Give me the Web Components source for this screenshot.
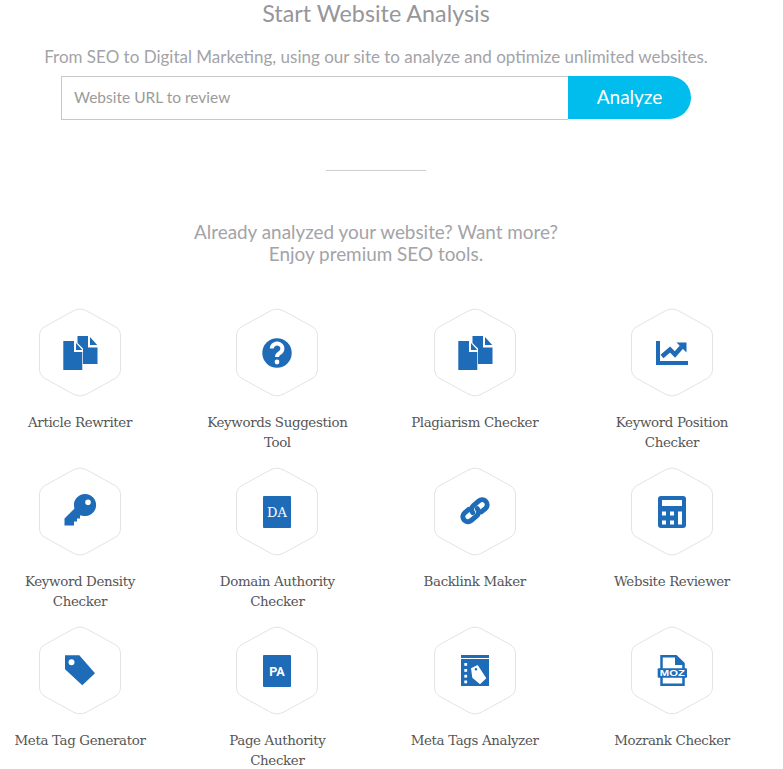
<!DOCTYPE html>
<html>
<head>
<meta charset="utf-8">
<title>Start Website Analysis</title>
<style>
	body { margin: 0; background: #fff; width: 752px; font-family: 'Lato', sans-serif; }
</style>
</head>
<body>
<analysis-form></analysis-form>
<premium-intro></premium-intro>
<tool-grid>
	<tool-card name="docs">Article Rewriter</tool-card>
	<tool-card name="question">Keywords Suggestion Tool</tool-card>
	<tool-card name="docs">Plagiarism Checker</tool-card>
	<tool-card name="chart">Keyword Position Checker</tool-card>
	<tool-card name="key">Keyword Density Checker</tool-card>
	<tool-card name="da">Domain Authority Checker</tool-card>
	<tool-card name="link">Backlink Maker</tool-card>
	<tool-card name="calc">Website Reviewer</tool-card>
	<tool-card name="tag">Meta Tag Generator</tool-card>
	<tool-card name="pa">Page Authority Checker</tool-card>
	<tool-card name="analyzer">Meta Tags Analyzer</tool-card>
	<tool-card name="moz">Mozrank Checker</tool-card>
</tool-grid>

<script>
const BLUE = '#1e6bb8';

const ICONS = {
	docs: `
		<path d="M27.5 13H38V24.5H47.5V41H33V25.5L27.5 20Z"/>
		<path d="M40 14L47.2 22H40Z"/>
		<path d="M13.3 18H24V29H32.3V47H13.3Z"/>
		<path d="M26 20L32.3 27H26Z"/>`,
	question: `
		<circle cx="30" cy="30" r="14.7"/>
		<path d="M24.8 25.5a5.3 5 0 1 1 8 4.4c-2 1.2-2.8 2-2.8 4.1" fill="none" stroke="#fff" stroke-width="4"/>
		<circle cx="30" cy="39" r="2.4" fill="#fff"/>`,
	chart: `
		<path d="M14 18h4v20h28v4H14z"/>
		<path d="M20 33.5L28 26.5L33 31.5L39.5 24" fill="none" stroke="${BLUE}" stroke-width="4.5"/>
		<path d="M34.5 19.5H44.5V29.5Z"/>`,
	key: `
		<path fill-rule="evenodd" d="M35 12a11 11 0 1 1-3.500 21.400L30 33.500V36.500H27V39.500H24V43.500H14.500V36.500L24.500 26.500A11 11 0 0 1 35 12ZM38 17.500a2.800 2.800 0 1 0 0 5.600a2.800 2.800 0 0 0 0-5.600Z"/>`,
	da: `
		<rect x="16" y="14" width="28" height="32" rx="1"/>
		<text x="30" y="35" text-anchor="middle" fill="#fff" font-family="'DejaVu Serif', serif" font-size="13">DA</text>`,
	pa: `
		<rect x="16" y="14" width="28" height="32" rx="1"/>
		<text x="30" y="34.500" text-anchor="middle" fill="#fff" font-family="'Roboto', sans-serif" font-weight="700" font-size="12.500">PA</text>`,
	link: `
		<g transform="rotate(-40 30 28.700)" fill="none" stroke="${BLUE}" stroke-width="5" stroke-linecap="round">
			<path d="M26 23.700H20.700A5 5 0 0 0 20.700 33.700H28A5 5 0 0 0 33 28.700"/>
			<path d="M34 33.700H39.300A5 5 0 0 0 39.300 23.700H32A5 5 0 0 0 27 28.700"/>
		</g>`,
	calc: `
		<rect x="16" y="14" width="28" height="32" rx="3"/>
		<g fill="#fff">
			<rect x="20" y="18" width="20" height="6"/>
			<rect x="20" y="29.500" width="4" height="4"/>
			<rect x="28" y="29.500" width="4" height="4"/>
			<rect x="36" y="29.500" width="4" height="13"/>
			<rect x="20" y="38.500" width="4" height="4"/>
			<rect x="28" y="38.500" width="4" height="4"/>
		</g>`,
	tag: `
		<path fill-rule="evenodd" d="M15 14.300H29.300L45 32.300L32.300 44.300L15 28.300ZM21.500 18.300a3 3 0 1 0 0 6a3 3 0 0 0 0-6Z"/>`,
	analyzer: `
		<path d="M16 14H44V17H16Z"/>
		<path d="M16 18H44V45H16Z"/>
		<g fill="#fff">
			<rect x="19.300" y="22" width="2.800" height="2.800"/>
			<rect x="19.300" y="28" width="2.800" height="2.800"/>
			<rect x="19.300" y="33.800" width="2.800" height="2.800"/>
			<rect x="19.300" y="39.500" width="2.800" height="2.800"/>
			<path fill-rule="evenodd" d="M26 27.300L32.700 24L41.300 37.300L35 43.300L27.300 36.700ZM31 27a1.300 1.300 0 1 0 0 2.600a1.300 1.300 0 0 0 0-2.600Z"/>
		</g>`,
	moz: `
		<path d="M19.500 28V15.300H34L41.500 22.500V28M41.500 36V43.800H19.500V36" fill="none" stroke="${BLUE}" stroke-width="2.500"/>
		<path d="M33 15V24H42Z"/>
		<rect x="15.700" y="27.300" width="29.300" height="9.400" rx="1"/>
		<text x="30.300" y="35.200" text-anchor="middle" fill="#fff" font-family="'Liberation Sans', sans-serif" font-weight="700" font-size="9.500" textLength="25" lengthAdjust="spacingAndGlyphs">MOZ</text>`
};

class AnalysisForm extends HTMLElement {
	constructor() {
		super().attachShadow({ mode: 'open' });
		this.shadowRoot.innerHTML = /*html*/ `
			<style>
				:host { display: block; text-align: center; color: #9a9a9f; font-family: 'Lato', sans-serif; }
				h2 { margin: 0; font-weight: 400; font-size: 23.300px; line-height: 27px; color: #96969b; }
				p { margin: 16px 0 0; font-size: 17px; line-height: 27px; white-space: nowrap; color: #a3a3a8; }
				form { display: flex; margin: 6px 0 0 61px; width: 630px; height: 44px; }
				input {
					flex: 1; min-width: 0; box-sizing: border-box; height: 44px; padding: 0 12px 2px;
					border: 1px solid #c8c8c8; border-right: 0; border-radius: 0; outline: 0;
					font: 400 15.500px 'Lato', sans-serif; color: #888;
				}
				input::placeholder { color: #9b9b9b; opacity: 1; }
				button {
					width: 123px; height: 43px; border: 0; padding: 0 0 2px; background: #00bdee; color: #fff;
					border-radius: 0 22px 22px 0; font: 400 19px 'Lato', sans-serif;
				}
				hr { width: 100px; height: 1px; margin: 50px auto 0; border: 0; background: #cfcfcf; }
			</style>
			<h2>Start Website Analysis</h2>
			<p>From SEO to Digital Marketing, using our site to analyze and optimize unlimited websites.</p>
			<form onsubmit="return false">
				<input type="text" placeholder="Website URL to review">
				<button type="button">Analyze</button>
			</form>
			<hr>`;
	}
}

class PremiumIntro extends HTMLElement {
	constructor() {
		super().attachShadow({ mode: 'open' });
		this.shadowRoot.innerHTML = /*html*/ `
			<style>
				:host { display: block; margin-top: 50px; text-align: center; font: 400 18.900px/22px 'Lato', sans-serif; color: #a3a3a8; }
			</style>
			Already analyzed your website? Want more?<br>Enjoy premium SEO tools.`;
	}
}

class ToolGrid extends HTMLElement {
	constructor() {
		super().attachShadow({ mode: 'open' });
		this.shadowRoot.innerHTML = /*html*/ `
			<style>
				:host {
					display: grid; grid-template-columns: repeat(4, 160px); column-gap: 37.33px;
					grid-auto-rows: 159px; margin-top: 43px;
				}
			</style>
			<slot></slot>`;
	}
}

class ToolCard extends HTMLElement {
	constructor() {
		super().attachShadow({ mode: 'open' });
		const icon = ICONS[this.getAttribute('name')] || '';
		this.shadowRoot.innerHTML = /*html*/ `
			<style>
				:host {
					display: flex; flex-direction: column; align-items: center; text-align: center;
					font: 400 14px/20px 'DejaVu Serif', serif; color: #555;
				}
				.hex { position: relative; width: 82px; height: 89px; }
				.hex svg { display: block; }
				.icon { position: absolute; left: 11px; top: 14.500px; }
				.label { margin-top: 16px; max-width: 150px; font-size: 13.400px; letter-spacing: -0.35px; }
			</style>
			<div class="hex">
				<svg width="82" height="89" viewBox="0 0 82 89">
					<path d="M34.500 2.800Q41 -0.500 47.500 2.800L76 18.500Q81.500 21.500 81.500 28V61Q81.500 67.500 76 70.500L47.500 86.200Q41 89.500 34.500 86.200L6 70.500Q.5 67.500 .5 61V28Q.5 21.500 6 18.500Z" fill="#fff" stroke="#e3e3e3"/>
				</svg>
				<svg class="icon" width="60" height="60" viewBox="0 0 60 60" fill="${BLUE}">${icon}</svg>
			</div>
			<div class="label"><slot></slot></div>`;
	}
}

customElements.define('analysis-form', AnalysisForm);
customElements.define('premium-intro', PremiumIntro);
customElements.define('tool-grid', ToolGrid);
customElements.define('tool-card', ToolCard);
</script>
</body>
</html>
